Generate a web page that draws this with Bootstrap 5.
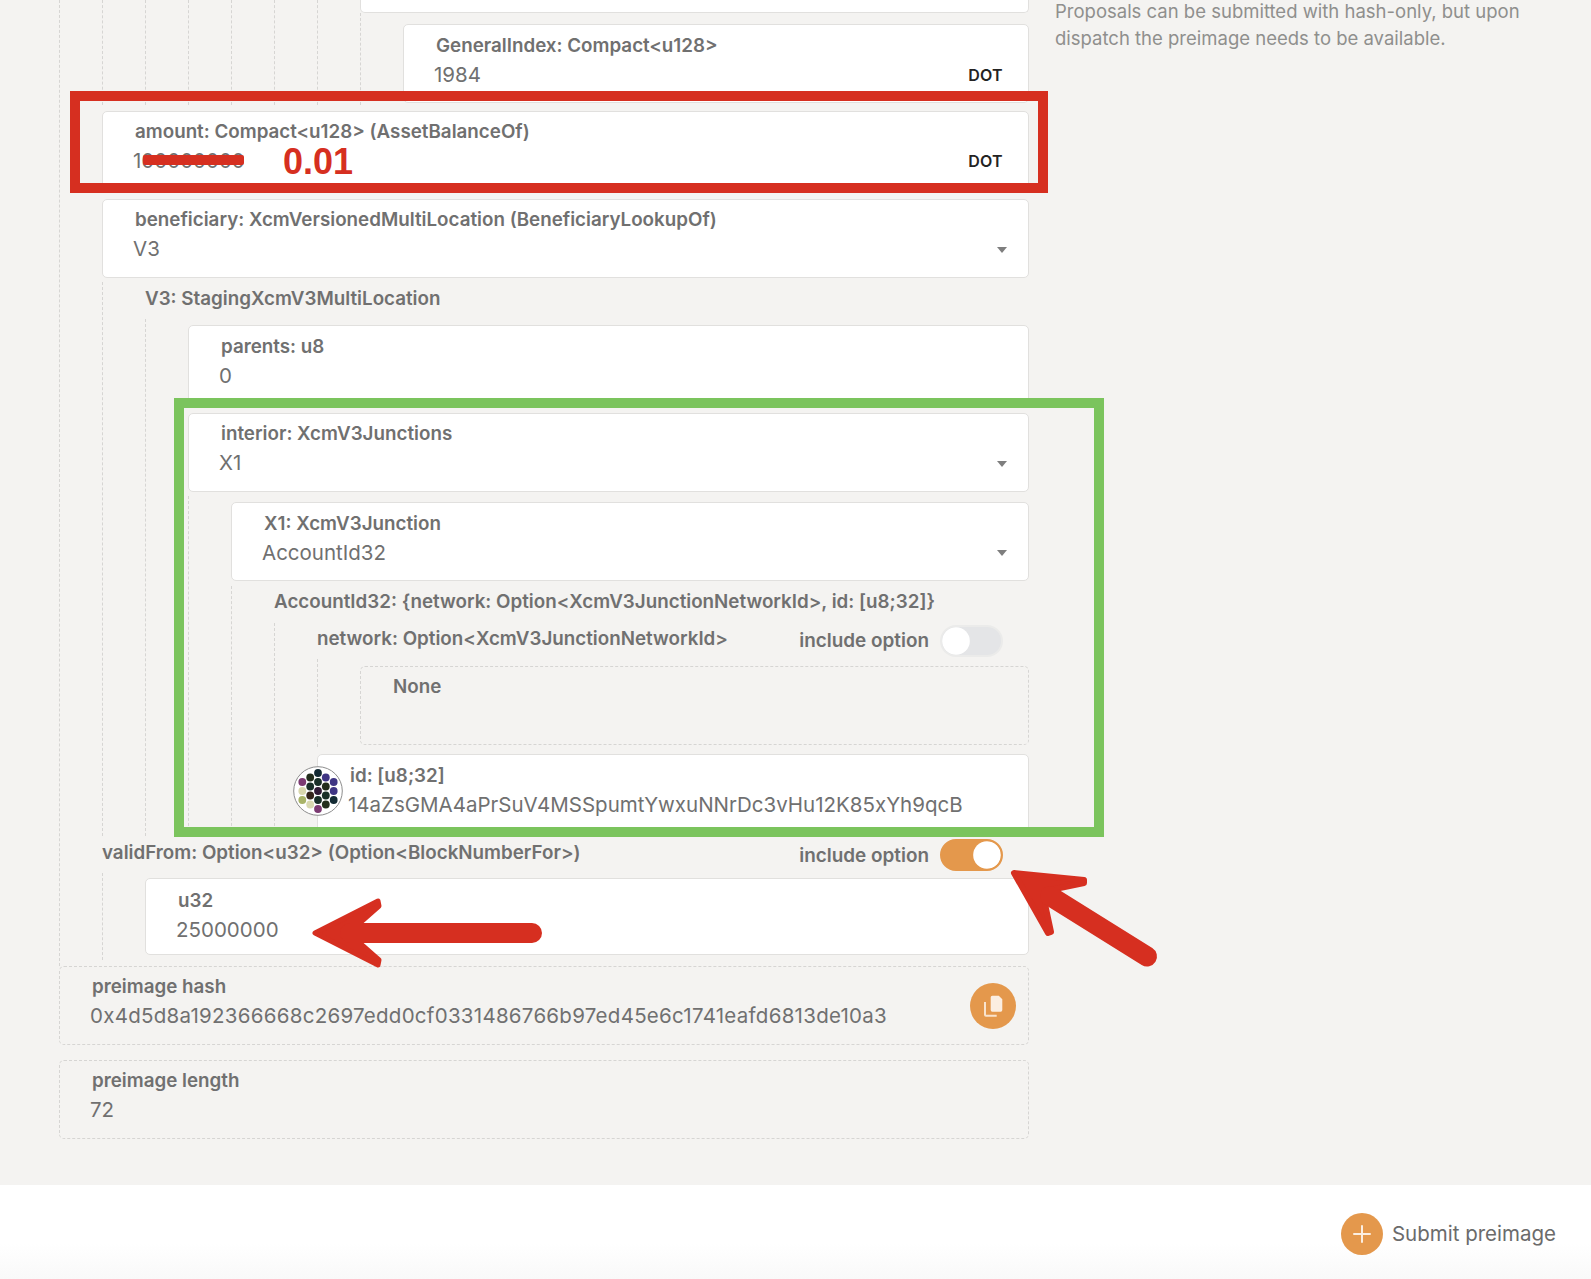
<!DOCTYPE html>
<html lang="en">
<head>
<meta charset="utf-8">
<title>Submit preimage</title>
<link href="https://cdn.jsdelivr.net/npm/bootstrap@5.3.0/dist/css/bootstrap.min.css" rel="stylesheet">
<style>
html,body{margin:0;height:1279px;overflow:hidden;background:#fff;}
body{font-family:Inter,"Liberation Sans",sans-serif;color:#707070;}
.canvas{height:1185px;background:#f4f3f1;overflow:hidden;}
.leftcol{width:970px;margin-left:59px;flex:none;}
.rightcol{width:500px;margin-left:26px;margin-top:-2px;flex:none;font-size:18.5px;line-height:27px;color:#8f8f8d;white-space:nowrap;}
.nest{border-left:1px dashed #d6d5d3;padding-left:42px;}
.fld{position:relative;height:79px;background:#fff;border:1px solid #e1e0de;border-radius:5px;padding:8.5px 26px 0 30px;}
.fld.ghost{background:transparent;border:1px dashed #d6d5d3;padding-top:8px;}
.fld.low{height:77px;padding-top:9.5px;}
.stub{height:13px;border-top:0;border-radius:0 0 5px 5px;padding:0;}
.lbl{font-size:18.8px;font-weight:600;line-height:24px;color:#707070;padding-left:2px;white-space:nowrap;}
.val{font-size:20.5px;font-weight:400;line-height:26px;margin-top:4px;color:#707070;white-space:nowrap;}
.hashv{letter-spacing:.27px;}
.hdr{font-size:18.8px;font-weight:600;line-height:24px;white-space:nowrap;}
.unit{position:absolute;right:25px;top:38.5px;font-size:16px;line-height:22px;font-weight:600;color:#232323;letter-spacing:.3px;}
.caret-mark{position:absolute;right:21px;top:47px;width:0;height:0;border-left:5.5px solid transparent;border-right:5.5px solid transparent;border-top:6px solid #7e7e7e;}
.opt{font-size:18.9px;font-weight:600;line-height:28px;margin-right:11px;}
.net-opt{padding-top:4px;}
.val-opt{padding-top:3px;}
.form-switch .form-check-input.tog{--bs-form-switch-bg:url("data:image/svg+xml,%3csvg xmlns='http://www.w3.org/2000/svg' viewBox='-4 -4 8 8'%3e%3ccircle r='3.95' fill='%23fff'/%3e%3c/svg%3e");width:63px;height:32px;margin:0;float:none;background-color:#e4e5e7;border:2px solid #ebebea;box-shadow:none;}
.form-switch .form-check-input.tog:checked{--bs-form-switch-bg:url("data:image/svg+xml,%3csvg xmlns='http://www.w3.org/2000/svg' viewBox='-4 -4 8 8'%3e%3ccircle r='3.95' fill='%23fff'/%3e%3c/svg%3e");background-color:#e4984c;border-color:#e4984c;}
.swbox{padding:0;margin:0;min-height:0;}
.net-sw{margin-top:2px;}
.mt55{margin-top:5.5px;}.mt45{margin-top:4.5px;}.mt9{margin-top:9px;}.mt85{margin-top:8.5px;}.mt7{margin-top:7px;}.mt16{margin-top:14.5px;}
.v3h{padding:5px 0 8px;}
.n-top{padding-top:11px;padding-bottom:2px;}
.n-6{padding-top:6px;}
.n-5{padding-top:6px;}
.n-acc{padding:4px 0 9.5px;}
.netrow{height:36px;padding-right:26px;}
.netrow .hdr{line-height:32px;}
.n-net{padding:7px 0 2px 42px;}
.idbox{padding-bottom:3px;}
.valrow{height:37px;padding:3px 26px 0 0;}
.valrow .hdr{line-height:28px;}
.n-u32{padding-top:5px;padding-bottom:4.5px;}
.l0{padding-bottom:6.5px;}
.idmark{position:absolute;left:-25px;top:10.5px;width:50px;height:50px;}
.round-act{width:46px;height:46px;border-radius:50%;background:#e4984c;border:0;padding:0;flex:none;}
.sidebtn{position:absolute;right:12px;top:16px;}
.foot{height:94px;background:linear-gradient(#fff 62%,#f9f9f9);padding-right:35px;}
.subbtn{font-size:20.5px;color:#6b6b6b;gap:9px;padding:0;border:0;margin-top:4px;}
.subbtn:hover{color:#6b6b6b;}
.plus{width:42px;height:42px;border-radius:50%;background:#e4984c;}
.overlay{position:absolute;left:0;top:0;pointer-events:none;}
.bignum{position:absolute;left:283px;top:142px;font-family:"Liberation Sans",Arial,sans-serif;font-weight:700;font-size:36px;line-height:40px;color:#d62f20;}
</style>
</head>
<body>
<div class="position-relative">
  <div class="canvas d-flex">
    <div class="leftcol">
      <div class="nest l0">
        <div class="nest"><div class="nest"><div class="nest"><div class="nest"><div class="nest"><div class="nest">
          <div class="fld stub"></div>
          <div class="nest n-top">
            <div class="fld">
              <div class="lbl">GeneralIndex: Compact&lt;u128&gt;</div>
              <div class="val">1984</div>
              <span class="unit">DOT</span>
            </div>
          </div>
        </div></div></div></div></div></div>

        <div class="fld mt55">
          <div class="lbl">amount: Compact&lt;u128&gt; (AssetBalanceOf)</div>
          <div class="val">100000000</div>
          <span class="unit">DOT</span>
        </div>
        <div class="fld mt9">
          <div class="lbl">beneficiary: XcmVersionedMultiLocation (BeneficiaryLookupOf)</div>
          <div class="val">V3</div>
          <span class="caret-mark"></span>
        </div>

        <div class="nest mt45">
          <div class="hdr v3h">V3: StagingXcmV3MultiLocation</div>
          <div class="nest n-6">
            <div class="fld">
              <div class="lbl">parents: u8</div>
              <div class="val">0</div>
            </div>
            <div class="fld mt85">
              <div class="lbl">interior: XcmV3Junctions</div>
              <div class="val">X1</div>
              <span class="caret-mark"></span>
            </div>
            <div class="nest mt45 n-5">
              <div class="fld">
                <div class="lbl">X1: XcmV3Junction</div>
                <div class="val">AccountId32</div>
                <span class="caret-mark"></span>
              </div>
              <div class="nest mt45">
                <div class="hdr n-acc">AccountId32: {network: Option&lt;XcmV3JunctionNetworkId&gt;, id: [u8;32]}</div>
                <div class="nest">
                  <div class="d-flex justify-content-between netrow">
                    <div class="hdr">network: Option&lt;XcmV3JunctionNetworkId&gt;</div>
                    <div class="d-flex align-items-start">
                      <span class="opt net-opt">include option</span>
                      <div class="form-check form-switch swbox net-sw"><input class="form-check-input tog" type="checkbox" role="switch" aria-label="include option"></div>
                    </div>
                  </div>
                  <div class="nest n-net">
                    <div class="fld ghost">
                      <div class="lbl">None</div>
                    </div>
                  </div>
                  <div class="idbox mt7">
                    <div class="fld">
                      <svg class="idmark" viewBox="-25 -25 50 50" aria-hidden="true">
                        <circle r="24.3" fill="#fff" stroke="#8d8d8d" stroke-width="1"/>
                        <g>
                          <circle cx="-15.7" cy="-9" r="3.9" fill="#7c3a72"/><circle cx="-15.7" cy="0" r="3.9" fill="#d9d8ae"/><circle cx="-15.7" cy="9" r="3.9" fill="#a9b468"/>
                          <circle cx="-7.8" cy="-13.5" r="3.9" fill="#232e1c"/><circle cx="-7.8" cy="-4.5" r="3.9" fill="#1a3028"/><circle cx="-7.8" cy="4.5" r="3.9" fill="#33241a"/><circle cx="-7.8" cy="13.5" r="3.9" fill="#d8d8b0"/>
                          <circle cx="0" cy="-18" r="3.9" fill="#132a33"/><circle cx="0" cy="-9" r="3.9" fill="#1a3028"/><circle cx="0" cy="0" r="3.9" fill="#301a35"/><circle cx="0" cy="9" r="3.9" fill="#1a3028"/><circle cx="0" cy="18" r="3.9" fill="#7c3a72"/>
                          <circle cx="7.8" cy="-13.5" r="3.9" fill="#3f3584"/><circle cx="7.8" cy="-4.5" r="3.9" fill="#232e1c"/><circle cx="7.8" cy="4.5" r="3.9" fill="#1a3028"/><circle cx="7.8" cy="13.5" r="3.9" fill="#232e1c"/>
                          <circle cx="15.7" cy="-9" r="3.9" fill="#3f3584"/><circle cx="15.7" cy="0" r="3.9" fill="#3f3584"/><circle cx="15.7" cy="9" r="3.9" fill="#132a33"/>
                        </g>
                      </svg>
                      <div class="lbl">id: [u8;32]</div>
                      <div class="val">14aZsGMA4aPrSuV4MSSpumtYwxuNNrDc3vHu12K85xYh9qcB</div>
                    </div>
                  </div>
                </div>
              </div>
            </div>
          </div>
        </div>

        <div class="d-flex justify-content-between valrow">
          <div class="hdr">validFrom: Option&lt;u32&gt; (Option&lt;BlockNumberFor&gt;)</div>
          <div class="d-flex align-items-start">
            <span class="opt val-opt">include option</span>
            <div class="form-check form-switch swbox"><input class="form-check-input tog" type="checkbox" role="switch" checked aria-label="include option"></div>
          </div>
        </div>
        <div class="nest n-u32">
          <div class="fld low">
            <div class="lbl">u32</div>
            <div class="val">25000000</div>
          </div>
        </div>
      </div>

      <div class="fld ghost">
        <div class="lbl">preimage hash</div>
        <div class="val hashv">0x4d5d8a192366668c2697edd0cf0331486766b97ed45e6c1741eafd6813de10a3</div>
        <button class="btn round-act sidebtn d-flex align-items-center justify-content-center" type="button" aria-label="copy">
          <svg width="24" height="24" viewBox="0 0 24 24" aria-hidden="true">
            <path d="M11.3 1.7h6.5l3.5 3.5v10.9a1.6 1.6 0 0 1-1.6 1.6h-8.4a1.6 1.6 0 0 1-1.6-1.6V3.3a1.6 1.6 0 0 1 1.6-1.6z" fill="#fbeee1"/>
            <path d="M4 8v12.7c0 .6.4 1 1 1h10.7" fill="none" stroke="#f9e3cd" stroke-width="2"/>
          </svg>
        </button>
      </div>
      <div class="fld ghost mt16">
        <div class="lbl">preimage length</div>
        <div class="val">72</div>
      </div>
    </div>
    <div class="rightcol">Proposals can be submitted with hash-only, but upon<br>dispatch the preimage needs to be available.</div>
  </div>

  <div class="foot d-flex justify-content-end align-items-center">
    <button class="btn subbtn d-flex align-items-center" type="button">
      <span class="plus d-flex align-items-center justify-content-center">
        <svg width="22" height="22" viewBox="0 0 22 22" aria-hidden="true"><path d="M11 3v16M3 11h16" stroke="#fbeee1" stroke-width="2" stroke-linecap="round"/></svg>
      </span>
      Submit preimage
    </button>
  </div>

  <svg class="overlay" width="1591" height="1279" viewBox="0 0 1591 1279" aria-hidden="true">
    <rect x="75" y="96" width="968" height="92" fill="none" stroke="#d62f20" stroke-width="10"/>
    <rect x="179" y="403" width="920" height="429" fill="none" stroke="#7bc45d" stroke-width="10"/>
    <rect x="143" y="155" width="101" height="10" rx="2" fill="#d62f20"/>
    <g fill="#d62f20" stroke="#d62f20" stroke-linejoin="round">
      <path d="M315 933 378 901 379 906 354 928V938L379 960 378 965Z" stroke-width="5"/>
      <line x1="350" y1="933" x2="532" y2="933" stroke-width="20" stroke-linecap="round"/>
      <path d="M1014 873 1084 880 1084 883 1055 889 1045 904 1051 932 1048 933Z" stroke-width="6"/>
      <line x1="1050" y1="896" x2="1147" y2="956.5" stroke-width="20" stroke-linecap="round"/>
    </g>
  </svg>
  <div class="bignum">0.01</div>
</div>
<script src="https://cdn.jsdelivr.net/npm/bootstrap@5.3.0/dist/js/bootstrap.bundle.min.js"></script>
</body>
</html>
